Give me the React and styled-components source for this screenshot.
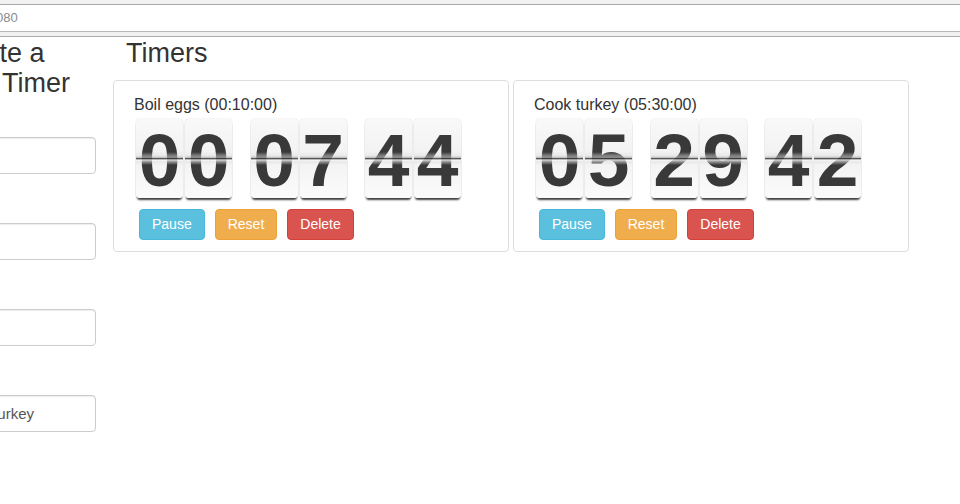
import React from "react";
import styled, { createGlobalStyle } from "styled-components";

const Global = createGlobalStyle`
  html, body { margin: 0; padding: 0; background: #fff; }
  body {
    font-family: "Liberation Sans", Arial, sans-serif;
    color: #333;
    overflow: hidden;
    width: 960px;
    height: 504px;
  }
  * { box-sizing: border-box; }
`;

const ChromeTop = styled.div`
  height: 5px;
  background: #f1f1f1;
  border-bottom: 1px solid #a9a9a9;
`;

const UrlBar = styled.div`
  height: 27px;
  background: #fff;
  border-bottom: 1px solid #b8b8b8;
  font-size: 13px;
  line-height: 26px;
  color: #8a8a8a;
  text-indent: -4px;
  white-space: nowrap;
  overflow: hidden;
`;

const ChromeStrip = styled.div`
  height: 5px;
  background: #f0f0f0;
  border-bottom: 1px solid #ababab;
`;

const Page = styled.div`
  display: flex;
  align-items: flex-start;
  margin-left: -59px;
`;

const LeftCol = styled.div`
  width: 155px;
  flex-shrink: 0;
`;

const RightCol = styled.div`
  margin-left: 17px;
  flex-shrink: 0;
`;

const Heading = styled.h2`
  font-size: 27px;
  line-height: 30px;
  font-weight: normal;
  color: #333;
  margin: 1px 0 ${(p) => p.$mb}px;
  padding-left: ${(p) => p.$indent || 0}px;
`;

const FormGroup = styled.div`
  margin-bottom: 24px;
`;

const Label = styled.label`
  display: block;
  font-size: 14px;
  font-weight: bold;
  line-height: 20px;
  margin-bottom: 5px;
  white-space: nowrap;
`;

const Input = styled.input`
  display: block;
  width: 155px;
  height: 37px;
  padding: 0 12px;
  font-family: "Liberation Sans", Arial, sans-serif;
  font-size: 15px;
  color: #555;
  background: #fff;
  border: 1px solid #ccc;
  border-radius: 4px;
  box-shadow: inset 0 1px 1px rgba(0, 0, 0, 0.075);
  outline: none;
`;

const CardRow = styled.div`
  display: flex;
  gap: 4px;
`;

const Card = styled.div`
  width: 396px;
  border: 1px solid #ddd;
  border-radius: 4px;
  padding: 13px 19px 11px 20px;
  background: #fff;
`;

const CardTitle = styled.div`
  font-size: 16px;
  line-height: 22px;
  color: #333;
`;

const Clock = styled.div`
  display: flex;
  gap: 18.5px;
  margin: 3px 0 0 2px;
`;

const Pair = styled.div`
  display: flex;
  gap: 2px;
`;

const Flap = styled.div`
  position: relative;
  width: 47px;
  height: 79px;
  border-radius: 4px;
  background: linear-gradient(
    to bottom,
    #f9f9f9 0%,
    #f3f3f3 40%,
    #ececec 49%,
    #f2f2f2 52%,
    #f7f7f7 75%,
    #fbfbfb 100%
  );
  box-shadow: 0 0 1px rgba(0, 0, 0, 0.35), 0 3px 2px -1px rgba(0, 0, 0, 0.75);
  font-family: "Liberation Sans", Arial, sans-serif;
  font-weight: bold;
  font-size: 75px;
  line-height: 82px;
  color: #393939;
  text-align: center;
  overflow: visible;

  &::after {
    content: "";
    position: absolute;
    left: 0;
    right: 0;
    top: 33px;
    height: 13px;
    background: linear-gradient(
      to bottom,
      rgba(255, 255, 255, 0) 0%,
      rgba(225, 225, 225, 0.45) 30%,
      rgba(170, 170, 170, 0.7) 44%,
      rgba(60, 60, 60, 0.85) 48%,
      rgba(60, 60, 60, 0.85) 54%,
      rgba(250, 250, 250, 0.85) 60%,
      rgba(225, 225, 225, 0.55) 75%,
      rgba(255, 255, 255, 0) 100%
    );
  }
`;

const Buttons = styled.div`
  display: flex;
  gap: 10px;
  margin: 11px 0 0 5px;
`;

const palette = {
  info: ["#5bc0de", "#46b8da"],
  warning: ["#f0ad4e", "#eea236"],
  danger: ["#d9534f", "#d43f3a"],
};

const Button = styled.button`
  height: 31px;
  padding: 0 12px;
  font-family: "Liberation Sans", Arial, sans-serif;
  font-size: 14px;
  line-height: 29px;
  color: #fff;
  background: ${(p) => palette[p.$kind][0]};
  border: 1px solid ${(p) => palette[p.$kind][1]};
  border-radius: 4px;
  cursor: pointer;
`;

const timers = [
  { name: "Boil eggs (00:10:00)", time: ["00", "07", "44"] },
  { name: "Cook turkey (05:30:00)", time: ["05", "29", "42"] },
];

const fields = [
  { label: "Hours", value: "" },
  { label: "Minutes", value: "" },
  { label: "Seconds", value: "" },
  { label: "Name", value: "Cook turkey" },
];

export default function App() {
  return (
    <>
      <Global />
      <ChromeTop />
      <UrlBar>080</UrlBar>
      <ChromeStrip />
      <Page>
        <LeftCol>
          <Heading $mb={14}>Create a New Timer</Heading>
          {fields.map((f) => (
            <FormGroup key={f.label}>
              <Label>{f.label}</Label>
              <Input value={f.value} readOnly />
            </FormGroup>
          ))}
        </LeftCol>
        <RightCol>
          <Heading $mb={12} $indent={13}>
            Timers
          </Heading>
          <CardRow>
            {timers.map((t) => (
              <Card key={t.name}>
                <CardTitle>{t.name}</CardTitle>
                <Clock>
                  {t.time.map((pair, i) => (
                    <Pair key={i}>
                      {pair.split("").map((d, j) => (
                        <Flap key={j}>{d}</Flap>
                      ))}
                    </Pair>
                  ))}
                </Clock>
                <Buttons>
                  <Button $kind="info">Pause</Button>
                  <Button $kind="warning">Reset</Button>
                  <Button $kind="danger">Delete</Button>
                </Buttons>
              </Card>
            ))}
          </CardRow>
        </RightCol>
      </Page>
    </>
  );
}
